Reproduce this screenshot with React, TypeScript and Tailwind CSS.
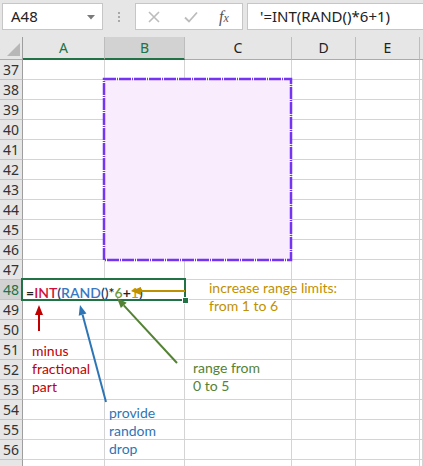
import React from "react";

const ROWS = Array.from({ length: 21 }, (_, i) => 37 + i);

const cell = "shrink-0 border-r border-b border-[#d4d4d4] bg-white";

function arrow(x1: number, y1: number, x2: number, y2: number, len = 10, half = 4) {
  // line from (x1,y1) ending in a head whose tip is (x2,y2)
  const dx = x2 - x1;
  const dy = y2 - y1;
  const d = Math.hypot(dx, dy);
  const ux = dx / d;
  const uy = dy / d;
  const bx = x2 - ux * len;
  const by = y2 - uy * len;
  const pts = `${x2},${y2} ${bx - uy * half},${by + ux * half} ${bx + uy * half},${by - ux * half}`;
  return { line: { x1, y1, x2: bx, y2: by }, pts };
}

function Arrow({ x1, y1, x2, y2, color }: { x1: number; y1: number; x2: number; y2: number; color: string }) {
  const a = arrow(x1, y1, x2, y2);
  return (
    <g>
      <line {...a.line} stroke={color} strokeWidth={2} />
      <polygon points={a.pts} fill={color} />
    </g>
  );
}

function Row({ n }: { n: number }) {
  const active = n === 48;
  return (
    <div className="flex h-[20px]">
      <div
        className={`w-[23px] shrink-0 border-r border-b border-r-[#9e9e9e] border-b-[#c4c4c4] text-center text-[14px] leading-[19px] ${
          active ? "bg-[#d2d2d2] text-[#217346]" : "bg-[#e6e6e6] text-[#333]"
        }`}
      >
        {n < 57 ? n : ""}
      </div>
      <div className={`w-[82px] ${cell} ${active ? "border-r-white" : ""}`}>
        {active && (
          <span className="relative z-10 ml-[3px] whitespace-nowrap font-['Lato',sans-serif] text-[14px] font-semibold leading-[19px] text-[#222]">
            =<span className="text-[#d0103a]">INT</span>
            <span className="text-[#1f3f6e]">(</span>
            <span className="text-[#3a77c2]">RAND</span>
            <span className="text-[#1f3f6e]">()</span>*<span className="text-[#6b9a3b]">6</span>+
            <span className="text-[#c99a06]">1</span>
            <span className="text-[#1f3f6e]">)</span>
          </span>
        )}
      </div>
      <div className={`w-[80px] ${cell}`} />
      <div className={`w-[107px] ${cell}`} />
      <div className={`w-[64px] ${cell}`} />
      <div className={`w-[64px] ${cell}`} />
      <div className={`flex-1 ${cell}`} />
    </div>
  );
}

function Header() {
  const hd = "shrink-0 border-r border-[#bdbdbd] text-center text-[14px] leading-[21px]";
  return (
    <div className="flex h-[23px] bg-[#e6e6e6]">
      <div className="relative w-[23px] shrink-0 border-r border-b border-r-[#9e9e9e] border-b-[#ababab]">
        <svg className="absolute left-0 top-0" width="22" height="22">
          <polygon points="20,6 20,19 7,19" fill="#b7b7b7" />
        </svg>
      </div>
      <div className={`w-[82px] ${hd} border-b-2 border-b-[#217346] text-[#217346]`}>A</div>
      <div className={`w-[80px] ${hd} border-b-2 border-b-[#217346] bg-[#d2d2d2] text-[#217346]`}>B</div>
      <div className={`w-[107px] ${hd} border-b border-b-[#ababab] text-[#222]`}>C</div>
      <div className={`w-[64px] ${hd} border-b border-b-[#ababab] text-[#222]`}>D</div>
      <div className={`w-[64px] ${hd} border-b border-b-[#ababab] text-[#222]`}>E</div>
      <div className="flex-1 border-b border-[#ababab]" />
    </div>
  );
}

function FormulaBar() {
  return (
    <div className="flex h-[37px] items-start gap-0 bg-[#e6e6e6] pt-[3px] pl-[2px]">
      <div className="relative flex h-[27px] w-[101px] items-center border border-[#c6c6c6] bg-white pl-[8px] text-[15px] text-[#222]">
        A48
        <svg className="absolute right-[7px] top-[11px]" width="8" height="5">
          <polygon points="0,0 8,0 4,4.5" fill="#7a7a7a" />
        </svg>
      </div>
      <div className="flex h-[27px] w-[32px] flex-col items-center justify-center gap-[2px]">
        <div className="h-[2px] w-[2px] bg-[#a8a8a8]" />
        <div className="h-[2px] w-[2px] bg-[#a8a8a8]" />
        <div className="h-[2px] w-[2px] bg-[#a8a8a8]" />
      </div>
      <div className="flex h-[27px] w-[108px] items-center border border-[#c6c6c6] bg-white">
        <svg className="ml-[12px]" width="12" height="12">
          <path d="M1 1 L11 11 M11 1 L1 11" stroke="#bcbcbc" strokeWidth="1.6" />
        </svg>
        <svg className="ml-[24px]" width="14" height="12">
          <path d="M1 6.5 L5 10.5 L13 1.5" stroke="#bcbcbc" strokeWidth="1.8" fill="none" />
        </svg>
        <span className="ml-[21px] font-['Liberation_Serif',serif] text-[16px] italic text-[#555]">
          f<span className="text-[12px]">x</span>
        </span>
      </div>
      <div className="ml-[4px] flex h-[27px] flex-1 items-center border border-r-0 border-[#c6c6c6] bg-white pl-[12px] text-[15px] text-[#222]">
        '=INT(RAND()*6+1)
      </div>
    </div>
  );
}

export default function App() {
  return (
    <div className="relative h-[466px] w-[423px] overflow-hidden bg-white font-['Noto_Sans',sans-serif]">
      <FormulaBar />
      <Header />
      {ROWS.map((n) => (
        <Row key={n} n={n} />
      ))}

      {/* purple shape */}
      <svg className="absolute left-[102px] top-[77px] z-20" width="191" height="185">
        <rect
          x="2"
          y="2"
          width="187"
          height="181"
          fill="#f9edfd"
          stroke="#7434f2"
          strokeWidth="2.5"
          strokeDasharray="12 1 1 1"
        />
      </svg>

      {/* selection */}
      <div className="absolute left-[21px] top-[278px] z-20 h-[23px] w-[165px] border-2 border-[#217346]" />
      <div className="absolute left-[182px] top-[297px] z-30 h-[7px] w-[7px] border border-white bg-[#217346]" />

      <svg className="pointer-events-none absolute left-0 top-0 z-30" width="423" height="466">
        <Arrow x1={185} y1={291} x2={131} y2={291} color="#bf9000" />
        <Arrow x1={39} y1={331} x2={39} y2={305} color="#c00000" />
        <Arrow x1={106} y1={402} x2={80} y2={305} color="#2e75b6" />
        <Arrow x1={177} y1={363} x2={117} y2={298} color="#548235" />
      </svg>

      <div className="absolute left-[209px] top-[279px] z-30 font-['Lato',sans-serif] text-[14px] leading-[18px] text-[#bf9000]">
        <div>increase range limits:</div>
        <div>from 1 to 6</div>
      </div>
      <div className="absolute left-[32px] top-[342px] z-30 font-['Lato',sans-serif] text-[14px] leading-[18px] text-[#c00000]">
        <div>minus</div>
        <div>fractional</div>
        <div>part</div>
      </div>
      <div className="absolute left-[109px] top-[404px] z-30 font-['Lato',sans-serif] text-[14px] leading-[18px] text-[#2e75b6]">
        <div>provide</div>
        <div>random</div>
        <div>drop</div>
      </div>
      <div className="absolute left-[193px] top-[359px] z-30 font-['Lato',sans-serif] text-[14px] leading-[18px] text-[#548235]">
        <div>range from</div>
        <div>0 to 5</div>
      </div>
    </div>
  );
}
